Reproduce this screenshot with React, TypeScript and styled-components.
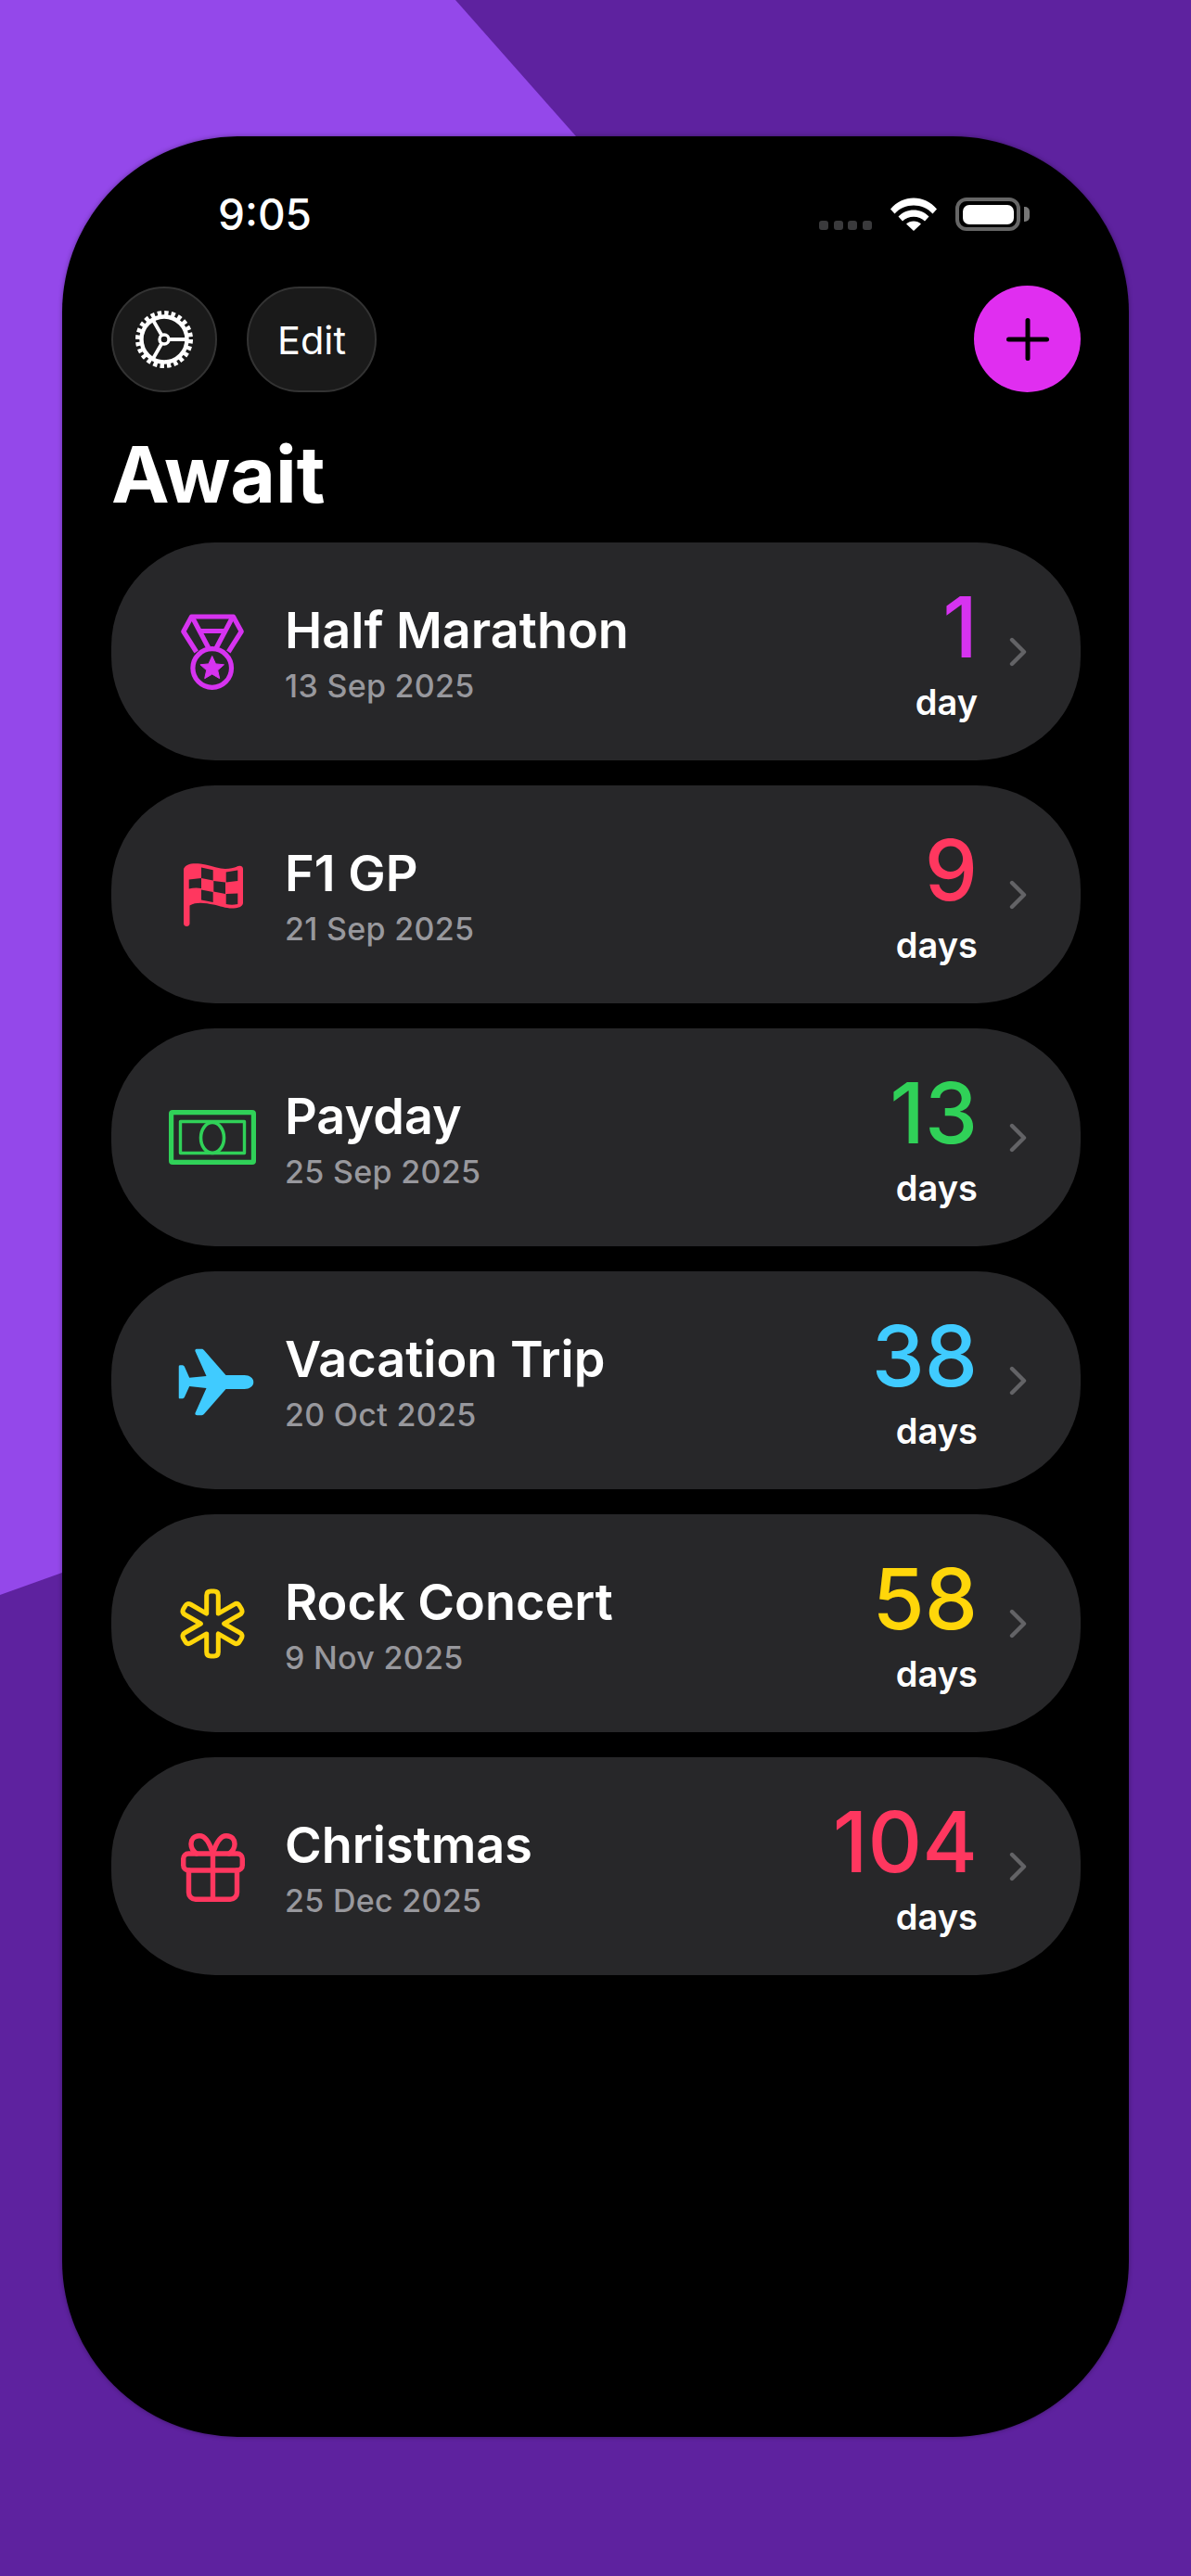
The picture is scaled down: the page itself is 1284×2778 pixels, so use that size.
import React from "react";
import styled, { createGlobalStyle } from "styled-components";

const GlobalStyle = createGlobalStyle`
  html, body {
    margin: 0;
    padding: 0;
    background: #5e229f;
  }
`;

const FONT = `Inter, "Liberation Sans", sans-serif`;

// builds the outline of the six armed star on the Rock Concert row
const starOutline = (cx: number, cy: number, halfWidth: number, length: number) => {
  const inner = halfWidth / Math.sin(Math.PI / 6);
  const r = 4.5;
  let d = "";
  for (let i = 0; i < 6; i++) {
    const a = (i * Math.PI) / 3;
    const ux = Math.sin(a);
    const uy = -Math.cos(a);
    const px = Math.cos(a);
    const py = Math.sin(a);
    const at = (along: number, side: number) =>
      `${(cx + ux * along + px * side).toFixed(2)} ${(cy + uy * along + py * side).toFixed(2)}`;
    const b = a - Math.PI / 6;
    const ix = cx + Math.sin(b) * inner;
    const iy = cy - Math.cos(b) * inner;
    d += `${i === 0 ? "M" : "L"}${ix.toFixed(2)} ${iy.toFixed(2)} `;
    d += `L${at(length - r, -halfWidth)} Q${at(length, -halfWidth)} ${at(length, -halfWidth + r)} `;
    d += `L${at(length, halfWidth - r)} Q${at(length, halfWidth)} ${at(length - r, halfWidth)} `;
  }
  return d + "Z";
};

const MedalIcon = ({ color }: { color: string }) => (
  <svg width="68" height="82" viewBox="0 0 68 82" fill="none" stroke={color} strokeWidth="5.2" strokeLinejoin="round">
    <path d="M16.7 41 2.800 19 11.500 3h45l8.700 16L51.300 41" />
    <path d="M12.500 4 31 39M55.500 4 37 39M19.500 18.500h29" />
    <circle cx="33.700" cy="58.500" r="20.800" />
    <path
      d="M33.700 45.500l3.800 8.400 9 .9-6.800 6 2 8.900-8-4.700-8 4.700 2-8.900-6.800-6 9-.9z"
      fill={color}
      stroke={color}
      strokeWidth="1"
    />
  </svg>
);

const FlagIcon = ({ color }: { color: string }) => (
  <svg width="64" height="69" viewBox="0 0 64 69" fill={color}>
    <path
      fillRule="evenodd"
      d="M0 7C2 2 8 .5 18 1.500 26 2.500 32 5 40 6.500 48 8 54 5.500 60 3.800 62.500 3.500 64 5 64 7V44C63.500 47.500 60 49 54 49.500 46 50 40 47 32 45.500 24 44 14 42 6.500 46.500V66C6.500 70 0 70 0 66ZM19 5.500V17L31.700 19.500V8.300ZM45.700 10.500V21.500L58.300 20V8.500ZM5.700 18.500V28.500C10 27.500 14 27 19 28V17ZM32.300 20V31.500L45 34V21.500ZM19 29.500V40.500L31.700 43V32ZM45.700 34V45C50 46 54 46 58.300 45V33.500Z"
    />
  </svg>
);

const CashIcon = ({ color }: { color: string }) => (
  <svg width="94" height="59" viewBox="0 0 94 59" fill="none" stroke={color} strokeLinejoin="round">
    <rect x="2.600" y="2.600" width="88.800" height="53.800" rx="1.500" strokeWidth="5.200" />
    <rect x="12.500" y="12.500" width="69" height="34" strokeWidth="3.400" />
    <ellipse cx="47" cy="30" rx="12.500" ry="16.500" strokeWidth="3.600" />
  </svg>
);

const PlaneIcon = ({ color }: { color: string }) => (
  <svg width="81" height="73" viewBox="0 0 81 73" fill={color}>
    <path d="M18 3.200C17.500 1.500 18.500.8 20 .8H25C26 .8 27 1.500 27.600 2.200L51 29H71C76.500 29 81 32.500 81 36.500S76.500 44 71 44H51L27.600 70.800C27 71.500 26 72.200 25 72.200H20C18.500 72.200 17.500 71.500 18 69.800L30 43 11.700 41 6.500 52.500C6 53.700 5 54.300 3.500 54.300H1.500C.5 54.300 0 53.700 0 52.700V20C0 19 .5 18.200 1.500 18.200H3.500C5 18.200 6 18.800 6.500 20L11.700 31.700 30 30Z" />
  </svg>
);

const AsteriskIcon = ({ color }: { color: string }) => (
  <svg width="72" height="76" viewBox="0 0 72 76" fill="none" stroke={color} strokeWidth="5" strokeLinejoin="round">
    <path d={starOutline(36, 38, 6.300, 35)} />
  </svg>
);

const GiftIcon = ({ color }: { color: string }) => (
  <svg width="69" height="74" viewBox="0 0 69 74" fill="none" stroke={color} strokeWidth="5.400" strokeLinecap="round" strokeLinejoin="round">
    <rect x="2.700" y="22" width="63.600" height="18" rx="5.500" />
    <path d="M8.500 40v24a7.300 7.300 0 0 0 7.300 7.300h37.400a7.300 7.300 0 0 0 7.300-7.300V40M34.500 22v49.300" />
    <path d="M34.500 22C31 10 26 2.700 20 2.700 14 2.700 11 7 11 11.500 11 16 14 20 17 22M34.500 22C38 10 43 2.700 49 2.700 55 2.700 58 7 58 11.500 58 16 55 20 52 22" />
  </svg>
);

const GearIcon = () => (
  <svg width="64" height="64" viewBox="0 0 64 64" fill="none" stroke="#fff">
    <circle cx="32" cy="32" r="28" strokeWidth="6" strokeDasharray="4.300 3.030" />
    <circle cx="32" cy="32" r="24.500" strokeWidth="4.400" />
    <circle cx="32" cy="32" r="5" strokeWidth="3.400" />
    <path d="M37 32H56M29.500 27.700 20 11.300M29.500 36.300 20 52.700" strokeWidth="3.800" />
  </svg>
);

const PlusIcon = () => (
  <svg width="46" height="46" viewBox="0 0 46 46" fill="none" stroke="#000" strokeWidth="5" strokeLinecap="round">
    <path d="M23 2.500v41M2.500 23h41" />
  </svg>
);

const WifiIcon = () => (
  <svg width="50" height="36" viewBox="0 0 50 36" fill="#fff">
    <path d="M0 12.500C13-3.500 37-3.500 50 12.500L45.500 17.500C35 5.500 15 5.500 4.500 17.500Z" />
    <path d="M8.500 20.500C17 11 33 11 41.500 20.500L37 25.500C31 19 19 19 13 25.500Z" />
    <path d="M17 28.500C21 24.500 29 24.500 33 28.500L25 36Z" />
  </svg>
);

const Chevron = () => (
  <svg width="19" height="32" viewBox="0 0 19 32" fill="none" stroke="#636366" strokeWidth="4.400" strokeLinecap="round" strokeLinejoin="round">
    <path d="M3 3l13 13L3 29" />
  </svg>
);

const events = [
  { name: "Half Marathon", date: "13 Sep 2025", count: "1", unit: "day", color: "#d633f0", Icon: MedalIcon, nudge: "0, 0" },
  { name: "F1 GP", date: "21 Sep 2025", count: "9", unit: "days", color: "#ff375f", Icon: FlagIcon, nudge: "1px, 0" },
  { name: "Payday", date: "25 Sep 2025", count: "13", unit: "days", color: "#30d158", Icon: CashIcon, nudge: "0, 0" },
  { name: "Vacation Trip", date: "20 Oct 2025", count: "38", unit: "days", color: "#40cbff", Icon: PlaneIcon, nudge: "3.5px, 2px" },
  { name: "Rock Concert", date: "9 Nov 2025", count: "58", unit: "days", color: "#ffd60a", Icon: AsteriskIcon, nudge: "0, 0" },
  { name: "Christmas", date: "25 Dec 2025", count: "104", unit: "days", color: "#ff375f", Icon: GiftIcon, nudge: "0, 1px" },
];

const App = () => {
  return (
    <Page>
      <GlobalStyle />
      <Backdrop width="1284" height="2778" viewBox="0 0 1284 2778">
        <path d="M0 0H491L621 147V1000L67 1696 0 1720Z" fill="#9448ea" />
      </Backdrop>

      <Phone>
        <StatusBar>
          <Time>9:05</Time>
          <StatusIcons>
            <Signal>
              {Array.from({ length: 4 }).map((_, i) => (
                <SignalDot key={i} />
              ))}
            </Signal>
            <WifiIcon />
            <Battery>
              <BatteryFill />
            </Battery>
          </StatusIcons>
        </StatusBar>

        <Toolbar>
          <RoundButton>
            <GearIcon />
          </RoundButton>
          <EditButton>Edit</EditButton>
          <AddButton>
            <PlusIcon />
          </AddButton>
        </Toolbar>

        <Title>Await</Title>

        <List>
          {events.map(({ name, date, count, unit, color, Icon, nudge }) => (
            <Card key={name}>
              <IconSlot $nudge={nudge}>
                <Icon color={color} />
              </IconSlot>
              <Info>
                <Name>{name}</Name>
                <DateText>{date}</DateText>
              </Info>
              <Countdown>
                <Count $color={color}>{count}</Count>
                <Unit>{unit}</Unit>
              </Countdown>
              <ChevronSlot>
                <Chevron />
              </ChevronSlot>
            </Card>
          ))}
        </List>
      </Phone>
    </Page>
  );
};

export default App;

const Page = styled.div`
  position: relative;
  overflow: hidden;
  box-sizing: border-box;
  width: 1284px;
  height: 2778px;
  padding: 147px 67px 150px;
  background: #5e229f;
  font-family: ${FONT};
  color: #fff;
`;

const Backdrop = styled.svg`
  position: absolute;
  top: 0;
  left: 0;
`;

const Phone = styled.div`
  position: relative;
  box-sizing: border-box;
  display: flex;
  flex-direction: column;
  width: 1150px;
  height: 2481px;
  padding: 66px 52px 0 53px;
  border-radius: 190px;
  background: #000;
  box-shadow: 0 0 5px rgba(0, 0, 0, 0.35);
`;

const StatusBar = styled.div`
  display: flex;
  justify-content: space-between;
  align-items: flex-start;
  height: 36px;
  padding: 0 65px 0 115px;
`;

const Time = styled.div`
  font-size: 46px;
  font-weight: 500;
  line-height: 36px;
`;

const StatusIcons = styled.div`
  display: flex;
  align-items: flex-end;
  gap: 20px;
`;

const Signal = styled.div`
  display: flex;
  gap: 5.7px;
  padding-bottom: 1px;
`;

const SignalDot = styled.span`
  width: 10px;
  height: 10px;
  border-radius: 3px;
  background: #3a3a3c;
`;

const Battery = styled.div`
  position: relative;
  box-sizing: border-box;
  width: 70px;
  height: 36px;
  padding: 3.5px;
  border: 4px solid #666;
  border-radius: 12px;

  &::after {
    content: "";
    position: absolute;
    top: 6px;
    right: -14px;
    width: 6px;
    height: 16px;
    border-radius: 0 5px 5px 0;
    background: #777;
  }
`;

const BatteryFill = styled.div`
  width: 100%;
  height: 100%;
  border-radius: 7px;
  background: #fff;
`;

const Toolbar = styled.div`
  display: flex;
  align-items: center;
  gap: 32px;
  margin-top: 59px;
`;

const RoundButton = styled.div`
  box-sizing: border-box;
  display: flex;
  align-items: center;
  justify-content: center;
  width: 114px;
  height: 114px;
  border: 2px solid #333;
  border-radius: 57px;
  background: #1a1a1a;
`;

const EditButton = styled(RoundButton)`
  width: 140px;
  padding-top: 2px;
  font-size: 41.5px;
  font-weight: 400;
`;

const AddButton = styled.div`
  display: flex;
  align-items: center;
  justify-content: center;
  width: 115px;
  height: 115px;
  margin-left: auto;
  border-radius: 50%;
  background: #e02ef0;
`;

const Title = styled.h1`
  margin: 39px 0 23px;
  font-size: 84px;
  font-weight: 700;
  line-height: 100px;
`;

const List = styled.div`
  display: flex;
  flex-direction: column;
  gap: 27px;
`;

const Card = styled.div`
  box-sizing: border-box;
  display: flex;
  align-items: flex-start;
  height: 235px;
  padding: 0 58px 0 50px;
  border-radius: 112px;
  background: #272729;
`;

const IconSlot = styled.div<{ $nudge: string }>`
  display: flex;
  align-items: center;
  justify-content: center;
  align-self: center;
  width: 118px;
  flex: none;
  transform: translate(${(p) => p.$nudge});
`;

const Info = styled.div`
  flex: 1;
  margin-left: 19px;
  padding-top: 63px;
`;

const Name = styled.div`
  font-size: 54px;
  font-weight: 600;
  line-height: 64px;
`;

const DateText = styled.div`
  margin-top: 8px;
  font-size: 34px;
  font-weight: 500;
  line-height: 40px;
  letter-spacing: 0.3px;
  color: #98989d;
`;

const Countdown = styled.div`
  display: flex;
  flex-direction: column;
  align-items: flex-end;
  padding-top: 41px;
`;

const Count = styled.div<{ $color: string }>`
  font-size: 91px;
  font-weight: 500;
  line-height: 100px;
  color: ${(p) => p.$color};
`;

const Unit = styled.div`
  margin-top: 9px;
  font-size: 38px;
  font-weight: 600;
  line-height: 44px;
`;

const ChevronSlot = styled.div`
  display: flex;
  align-self: center;
  margin-left: 34px;
`;
